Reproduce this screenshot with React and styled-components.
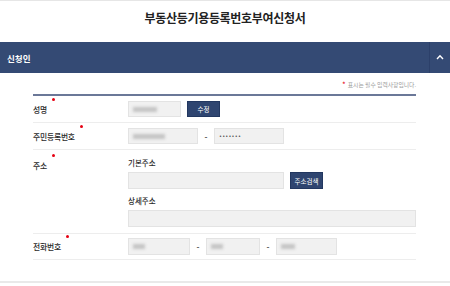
import React from 'react'
import styled, { createGlobalStyle } from 'styled-components'

const GlobalStyle = createGlobalStyle`
  html, body {
    margin: 0;
    padding: 0;
    background: #fff;
    font-family: "Noto Sans CJK KR", "Noto Sans", sans-serif;
    color: #333;
  }
`

function App() {
  return (
    <Page>
      <GlobalStyle />
      <TitleBar>
        <Title>부동산등기용등록번호부여신청서</Title>
      </TitleBar>

      <SectionHeader>
        <SectionTitle>신청인</SectionTitle>
        <ToggleButton aria-label="접기">
          <svg width="8" height="6" viewBox="0 0 8 6">
            <polyline points="1,5 4,1.8 7,5" fill="none" stroke="#fff" strokeWidth="1.4" />
          </svg>
        </ToggleButton>
      </SectionHeader>

      <FormArea>
        <Note>
          <Star>*</Star> 표시는 필수 입력사항입니다.
        </Note>
        <Table>
          <Row>
            <Label>
              성명<Required />
            </Label>
            <Fields>
              <Input $w={53}>
                <Blur $w={24} />
              </Input>
              <Button>수정</Button>
            </Fields>
          </Row>

          <Row>
            <Label>
              주민등록번호<Required />
            </Label>
            <Fields>
              <Input $w={70}>
                <Blur $w={32} />
              </Input>
              <Dash>-</Dash>
              <Input $w={70}>
                <Dots>•••••••</Dots>
              </Input>
            </Fields>
          </Row>

          <Row $top>
            <Label $pad>
              주소<Required />
            </Label>
            <Stack>
              <SubLabel>기본주소</SubLabel>
              <Fields>
                <Input $w={156} $h={17} />
                <Button $h={17}>주소검색</Button>
              </Fields>
              <SubLabel $gap>상세주소</SubLabel>
              <Input $h={17} $full />
            </Stack>
          </Row>

          <Row $h={26}>
            <Label>
              전화번호<Required />
            </Label>
            <Fields>
              <Input $w={62} $h={17}>
                <Blur $w={12} />
              </Input>
              <Dash>-</Dash>
              <Input $w={54} $h={17}>
                <Blur $w={12} />
              </Input>
              <Dash>-</Dash>
              <Input $w={61} $h={17}>
                <Blur $w={14} />
              </Input>
            </Fields>
          </Row>
        </Table>
      </FormArea>

      <Footer />
    </Page>
  )
}

export default App

const Page = styled.div`
  width: 450px;
  height: 286px;
  overflow: hidden;
  display: flex;
  flex-direction: column;
`

const TitleBar = styled.div`
  height: 42px;
  border-top: 1px solid #e6e6e6;
  display: flex;
  justify-content: center;
  padding-top: 9px;
  box-sizing: border-box;
`

const Title = styled.h1`
  margin: 0;
  font-size: 12px;
  font-weight: 700;
  color: #222;
  letter-spacing: -0.3px;
  line-height: 16px;
`

const SectionHeader = styled.div`
  height: 31px;
  background: #344a74;
  display: flex;
  align-items: center;
`

const SectionTitle = styled.h2`
  flex: 1;
  margin: 0;
  padding-left: 7px;
  font-size: 8.5px;
  font-weight: 700;
  color: #fff;
`

const ToggleButton = styled.button`
  width: 21px;
  height: 100%;
  padding: 0 0 2px;
  border: 0;
  border-left: 1px solid #2c406a;
  background: transparent;
  display: flex;
  align-items: center;
  justify-content: center;
`

const FormArea = styled.div`
  padding: 0 34px 0 33px;
  flex: 1;
`

const Note = styled.div`
  height: 21px;
  display: flex;
  align-items: center;
  justify-content: flex-end;
  padding-top: 2px;
  box-sizing: border-box;
  font-size: 5.8px;
  color: #999;
`

const Star = styled.span`
  color: #e60012;
  font-size: 8px;
  margin-right: 2px;
  align-self: flex-start;
  padding-top: 4px;
`

const Table = styled.div`
  border-top: 2px solid #6b7898;
`

const Row = styled.div`
  display: flex;
  align-items: ${(p) => (p.$top ? 'flex-start' : 'center')};
  min-height: ${(p) => p.$h || 27}px;
  border-bottom: 1px solid #ededed;
  box-sizing: border-box;
`

const Label = styled.div`
  width: 95px;
  flex-shrink: 0;
  font-size: 7.8px;
  font-weight: 500;
  color: #2a2a2a;
  letter-spacing: -0.2px;
  display: flex;
  align-items: flex-start;
  padding-top: ${(p) => (p.$pad ? '10px' : '0')};
`

const Required = styled.span`
  width: 3px;
  height: 3px;
  border-radius: 50%;
  background: #e60012;
  margin-left: 5px;
  margin-top: -6px;
`

const Fields = styled.div`
  display: flex;
  align-items: center;
  gap: 6px;
`

const Stack = styled.div`
  flex: 1;
  display: flex;
  flex-direction: column;
  padding: 5px 0 6px;
`

const SubLabel = styled.div`
  font-size: 7.5px;
  font-weight: 500;
  color: #2a2a2a;
  height: 15px;
  line-height: 15px;
  margin-top: ${(p) => (p.$gap ? '4px' : '0')};
  margin-bottom: 2px;
`

const Input = styled.div`
  width: ${(p) => (p.$full ? 'auto' : `${p.$w}px`)};
  height: ${(p) => p.$h || 16}px;
  background: #f1f1f1;
  border: 1px solid #e3e3e3;
  box-sizing: border-box;
  display: flex;
  align-items: center;
  padding-left: 4px;
`

const Blur = styled.span`
  width: ${(p) => p.$w}px;
  height: 5px;
  background: #c4c4c4;
  filter: blur(1.5px);
`

const Dots = styled.span`
  font-family: "DejaVu Sans", sans-serif;
  font-size: 5px;
  letter-spacing: 0.2px;
  color: #333;
`

const Dash = styled.span`
  width: 4px;
  font-size: 8px;
  font-weight: 700;
  color: #555;
  text-align: center;
`

const Button = styled.button`
  width: 33px;
  height: ${(p) => p.$h || 16}px;
  border: 1px solid #223760;
  background: #2f4570;
  color: #fff;
  font-family: inherit;
  font-size: 6.5px;
  padding: 0;
`

const Footer = styled.div`
  height: 3px;
  border-top: 2px solid #e9e9e9;
`
